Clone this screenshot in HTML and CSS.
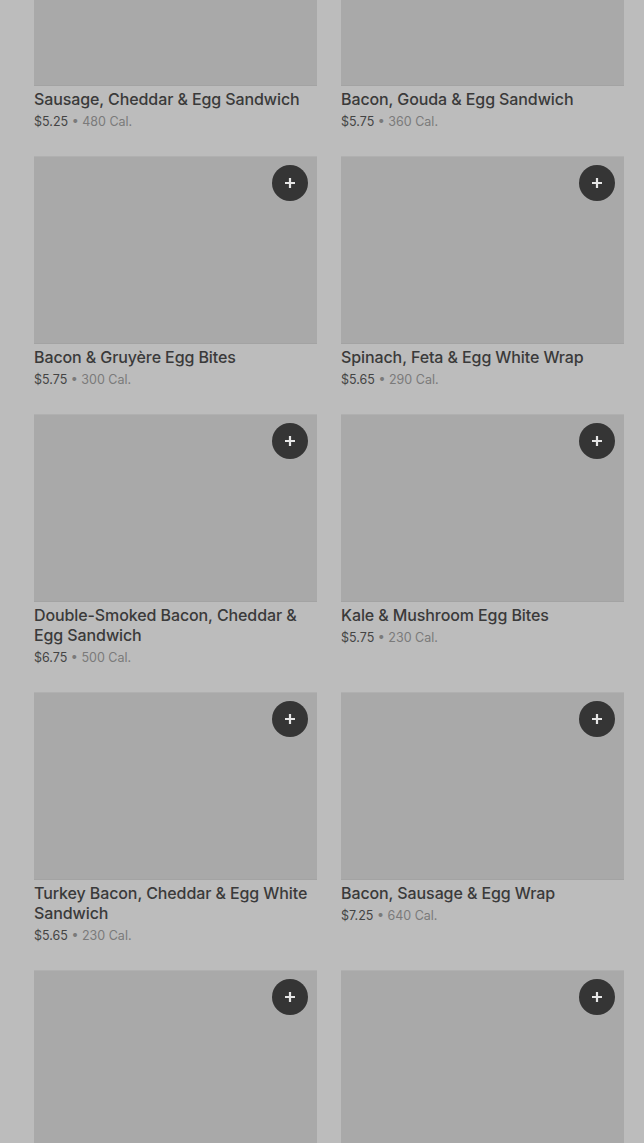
FILE: index.html
```html
<!DOCTYPE html>
<html lang="en">
<head>
    <meta charset="UTF-8">
    <meta name="viewport" content="width=device-width, initial-scale=1.0">
    <title>Hot Breakfast</title>
    <link rel="stylesheet" href="styles.css">
</head>
<body>
    <div class="menu-grid">
        <div class="item">
            <div class="photo"></div>
            <h3 class="name">Sausage, Cheddar &amp; Egg Sandwich</h3>
            <p class="info"><span class="price">$5.25</span> • 480 Cal.</p>
        </div>
        <div class="item">
            <div class="photo"></div>
            <h3 class="name">Bacon, Gouda &amp; Egg Sandwich</h3>
            <p class="info"><span class="price">$5.75</span> • 360 Cal.</p>
        </div>
        <div class="item">
            <div class="photo"><button class="add"><svg viewBox="0 0 12 12"><path d="M6 1v10M1 6h10"/></svg></button></div>
            <h3 class="name">Bacon &amp; Gruyère Egg Bites</h3>
            <p class="info"><span class="price">$5.75</span> • 300 Cal.</p>
        </div>
        <div class="item">
            <div class="photo"><button class="add"><svg viewBox="0 0 12 12"><path d="M6 1v10M1 6h10"/></svg></button></div>
            <h3 class="name">Spinach, Feta &amp; Egg White Wrap</h3>
            <p class="info"><span class="price">$5.65</span> • 290 Cal.</p>
        </div>
        <div class="item">
            <div class="photo"><button class="add"><svg viewBox="0 0 12 12"><path d="M6 1v10M1 6h10"/></svg></button></div>
            <h3 class="name">Double-Smoked Bacon, Cheddar &amp; Egg Sandwich</h3>
            <p class="info"><span class="price">$6.75</span> • 500 Cal.</p>
        </div>
        <div class="item">
            <div class="photo"><button class="add"><svg viewBox="0 0 12 12"><path d="M6 1v10M1 6h10"/></svg></button></div>
            <h3 class="name">Kale &amp; Mushroom Egg Bites</h3>
            <p class="info"><span class="price">$5.75</span> • 230 Cal.</p>
        </div>
        <div class="item">
            <div class="photo"><button class="add"><svg viewBox="0 0 12 12"><path d="M6 1v10M1 6h10"/></svg></button></div>
            <h3 class="name">Turkey Bacon, Cheddar &amp; Egg White Sandwich</h3>
            <p class="info"><span class="price">$5.65</span> • 230 Cal.</p>
        </div>
        <div class="item">
            <div class="photo"><button class="add"><svg viewBox="0 0 12 12"><path d="M6 1v10M1 6h10"/></svg></button></div>
            <h3 class="name">Bacon, Sausage &amp; Egg Wrap</h3>
            <p class="info"><span class="price">$7.25</span> • 640 Cal.</p>
        </div>
        <div class="item">
            <div class="photo"><button class="add"><svg viewBox="0 0 12 12"><path d="M6 1v10M1 6h10"/></svg></button></div>
        </div>
        <div class="item">
            <div class="photo"><button class="add"><svg viewBox="0 0 12 12"><path d="M6 1v10M1 6h10"/></svg></button></div>
        </div>
    </div>
</body>
</html>
```

FILE: styles.css
```css
*{ box-sizing: border-box;}
body{
    margin:0;
    background:#bcbcbc;
    font-family: Inter, Roboto, "Liberation Sans", sans-serif;
    overflow:hidden;
}
.menu-grid{
    display:grid;
    grid-template-columns: 283px 283px;
    column-gap:24px;
    row-gap:25px;
    padding:0 20px 0 34px;
    margin-top:-102px;
    align-items:start;
}
.photo{
    position:relative;
    height:188px;
    background:#a9a9a9;
    border-top:1px solid #b0b0b0;
    border-bottom:1px solid #a3a3a3;
}
.add{
    position:absolute;
    top:8px;
    right:9px;
    width:36px;
    height:36px;
    border:none;
    border-radius:50%;
    background:#353535;
    padding:0;
    display:flex;
    align-items:center;
    justify-content:center;
}
.add svg{
    width:12px;
    height:12px;
    stroke:#e6e6e6;
    stroke-width:2.2;
    fill:none;
}
.name{
    margin:3px 0 0;
    font-size:16px;
    line-height:20px;
    font-weight:500;
    color:#3a3a3a;
    letter-spacing:-0.1px;
}
.info{
    margin:4px 0 0;
    font-size:12.5px;
    line-height:18px;
    color:#7a7a7a;
}
.price{
    color:#444;
}
```
